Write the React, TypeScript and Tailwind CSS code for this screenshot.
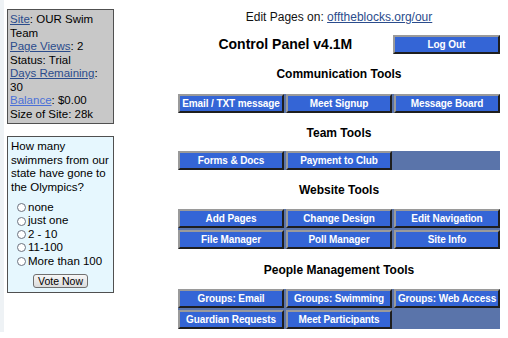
import React from "react";

const font = { fontFamily: '"Liberation Sans", Arial, sans-serif' };

const Btn = ({ label }: { label: string }) => (
  <div className="h-[19px] flex items-center justify-center bg-[#3465d6] text-white font-bold text-[10px] tracking-[-0.1px] border-2 border-t-[#9a9a9a] border-l-[#9a9a9a] border-b-[#1e1e1e] border-r-[#1e1e1e] whitespace-nowrap overflow-hidden">
    {label}
  </div>
);

const Empty = () => <div className="h-[19px] bg-[#5a74aa]" />;

const Heading = ({ children }: { children: React.ReactNode }) => (
  <h2 className="text-center font-bold text-[12px] leading-[12px] text-black">{children}</h2>
);

const Radio = ({ label }: { label: string }) => (
  <label className="flex items-center gap-[2px] h-[13.4px]">
    <span className="w-[9px] h-[9px] rounded-full border border-[#6b7280] bg-white shrink-0" />
    <span>{label}</span>
  </label>
);

const App = () => {
  return (
    <div className="w-[508px] h-[338px] bg-white flex text-black overflow-hidden" style={font}>
      <div className="w-[4px] h-[332px] bg-[#eef2f5] shrink-0" />
      <div className="ml-[3px] mt-[9px] w-[107px] flex flex-col gap-[12px] shrink-0 text-[11.5px] leading-[13.5px]">
        <div className="bg-[#c8c8c8] border border-[#505050] px-[2px] pt-[3px] pb-[2px]">
          <div>
            <a className="text-[#2b4c8c] underline">Site</a>: OUR Swim Team
          </div>
          <div>
            <a className="text-[#2b4c8c] underline">Page Views</a>: 2
          </div>
          <div>Status: Trial</div>
          <div>
            <a className="text-[#2b4c8c] underline">Days Remaining</a>: 30
          </div>
          <div>
            <a className="text-[#4a70d8] underline">Balance</a>: $0.00
          </div>
          <div>Size of Site: 28k</div>
        </div>
        <div className="bg-[#e6f7fe] border border-[#505050] pl-[3px] pr-[1px] pt-[3px] pb-[4px]">
          <p>How many swimmers from our state have gone to the Olympics?</p>
          <div className="mt-[7px] ml-[6px] flex flex-col">
            <Radio label="none" />
            <Radio label="just one" />
            <Radio label="2 - 10" />
            <Radio label="11-100" />
            <Radio label="More than 100" />
          </div>
          <div className="flex justify-center mt-[6px] pr-[2px]">
            <button className="w-[55px] h-[14px] text-[10.5px] leading-none rounded-[3px] border border-[#707070] bg-gradient-to-b from-[#f6f6f6] to-[#dcdcdc]">
              Vote Now
            </button>
          </div>
        </div>
      </div>

      <div className="ml-[64px] w-[322px] flex flex-col shrink-0">
        <p className="mt-[10px] text-center text-[12px] leading-[15px] text-[#111]">
          Edit Pages on: <a className="text-[#2b4c8c] underline">offtheblocks.org/our</a>
        </p>
        <div className="mt-[10px] grid grid-cols-3 items-center">
          <div className="col-span-2 text-center font-bold text-[14px] leading-[19px]">Control Panel v4.1M</div>
          <Btn label="Log Out" />
        </div>

        <div className="mt-[14px]"><Heading>Communication Tools</Heading></div>
        <div className="mt-[14px] grid grid-cols-3 gap-[2px] bg-[#5a74aa]">
          <Btn label="Email / TXT message" />
          <Btn label="Meet Signup" />
          <Btn label="Message Board" />
        </div>

        <div className="mt-[14px]"><Heading>Team Tools</Heading></div>
        <div className="mt-[12px] grid grid-cols-3 gap-[2px] bg-[#5a74aa]">
          <Btn label="Forms & Docs" />
          <Btn label="Payment to Club" />
          <Empty />
        </div>

        <div className="mt-[14px]"><Heading>Website Tools</Heading></div>
        <div className="mt-[13px] grid grid-cols-3 gap-[2px] bg-[#5a74aa]">
          <Btn label="Add Pages" />
          <Btn label="Change Design" />
          <Btn label="Edit Navigation" />
          <Btn label="File Manager" />
          <Btn label="Poll Manager" />
          <Btn label="Site Info" />
        </div>

        <div className="mt-[15px]"><Heading>People Management Tools</Heading></div>
        <div className="mt-[13px] grid grid-cols-3 gap-[2px] bg-[#5a74aa]">
          <Btn label="Groups: Email" />
          <Btn label="Groups: Swimming" />
          <Btn label="Groups: Web Access" />
          <Btn label="Guardian Requests" />
          <Btn label="Meet Participants" />
          <Empty />
        </div>
      </div>
    </div>
  );
};

export default App;
